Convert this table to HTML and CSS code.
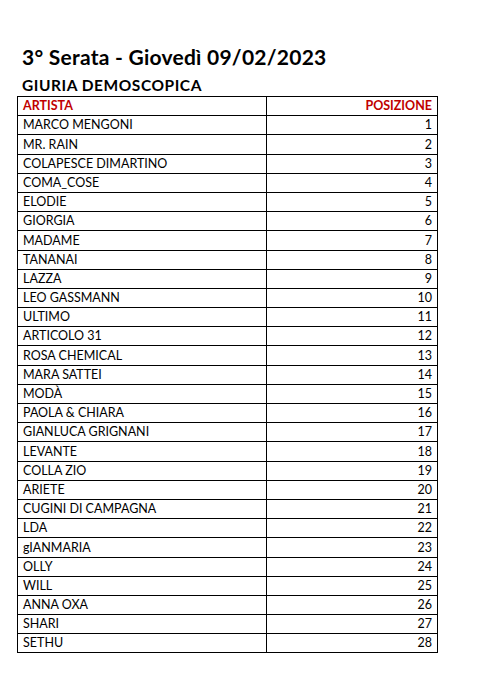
FILE: index.html
```html
<!DOCTYPE html>
<html lang="it">
<head>
<meta charset="utf-8">
<title>3° Serata - Giovedì 09/02/2023</title>
<link rel="stylesheet" href="styles.css">
</head>
<body>
<div class="page">
  <h1 class="title">3° Serata - Giovedì 09/02/2023</h1>
  <h2 class="subtitle">GIURIA DEMOSCOPICA</h2>
  <table class="rank">
    <thead>
      <tr><th class="c-name">ARTISTA</th><th class="c-pos">POSIZIONE</th></tr>
    </thead>
    <tbody>
      <tr><td class="c-name">MARCO MENGONI</td><td class="c-pos">1</td></tr>
      <tr><td class="c-name">MR. RAIN</td><td class="c-pos">2</td></tr>
      <tr><td class="c-name">COLAPESCE DIMARTINO</td><td class="c-pos">3</td></tr>
      <tr><td class="c-name">COMA_COSE</td><td class="c-pos">4</td></tr>
      <tr><td class="c-name">ELODIE</td><td class="c-pos">5</td></tr>
      <tr><td class="c-name">GIORGIA</td><td class="c-pos">6</td></tr>
      <tr><td class="c-name">MADAME</td><td class="c-pos">7</td></tr>
      <tr><td class="c-name">TANANAI</td><td class="c-pos">8</td></tr>
      <tr><td class="c-name">LAZZA</td><td class="c-pos">9</td></tr>
      <tr><td class="c-name">LEO GASSMANN</td><td class="c-pos">10</td></tr>
      <tr><td class="c-name">ULTIMO</td><td class="c-pos">11</td></tr>
      <tr><td class="c-name">ARTICOLO 31</td><td class="c-pos">12</td></tr>
      <tr><td class="c-name">ROSA CHEMICAL</td><td class="c-pos">13</td></tr>
      <tr><td class="c-name">MARA SATTEI</td><td class="c-pos">14</td></tr>
      <tr><td class="c-name">MODÀ</td><td class="c-pos">15</td></tr>
      <tr><td class="c-name">PAOLA &amp; CHIARA</td><td class="c-pos">16</td></tr>
      <tr><td class="c-name">GIANLUCA GRIGNANI</td><td class="c-pos">17</td></tr>
      <tr><td class="c-name">LEVANTE</td><td class="c-pos">18</td></tr>
      <tr><td class="c-name">COLLA ZIO</td><td class="c-pos">19</td></tr>
      <tr><td class="c-name">ARIETE</td><td class="c-pos">20</td></tr>
      <tr><td class="c-name">CUGINI DI CAMPAGNA</td><td class="c-pos">21</td></tr>
      <tr><td class="c-name">LDA</td><td class="c-pos">22</td></tr>
      <tr><td class="c-name">gIANMARIA</td><td class="c-pos">23</td></tr>
      <tr><td class="c-name">OLLY</td><td class="c-pos">24</td></tr>
      <tr><td class="c-name">WILL</td><td class="c-pos">25</td></tr>
      <tr><td class="c-name">ANNA OXA</td><td class="c-pos">26</td></tr>
      <tr><td class="c-name">SHARI</td><td class="c-pos">27</td></tr>
      <tr><td class="c-name">SETHU</td><td class="c-pos">28</td></tr>
    </tbody>
  </table>
</div>
</body>
</html>
```
FILE: styles.css
```css
html, body {
  margin: 0;
  padding: 0;
  background: #ffffff;
}
.page {
  padding: 44px 0 0 17px;
  font-family: Lato, "Open Sans", sans-serif;
  color: #000;
}
.title {
  margin: 0 0 0 5px;
  font-size: 21px;
  font-weight: 700;
  line-height: 26px;
  letter-spacing: 0.25px;
}
.subtitle {
  margin: 5px 0 0 5px;
  font-size: 15.5px;
  font-weight: 700;
  line-height: 20px;
  letter-spacing: 0.55px;
}
.rank {
  margin-top: 1px;
  border-collapse: collapse;
  width: 421px;
  table-layout: fixed;
  font-size: 12.5px;
}
.rank th, .rank td {
  border: 1px solid #000;
  height: 18.2px;
  padding: 0 5px 0 5px;
  line-height: 18px;
  font-weight: 400;
  vertical-align: bottom;
}
.rank th {
  color: #c00000;
  font-weight: 700;
}
.rank .c-name {
  width: 238px;
  text-align: left;
}
.rank .c-pos {
  text-align: right;
}
```
